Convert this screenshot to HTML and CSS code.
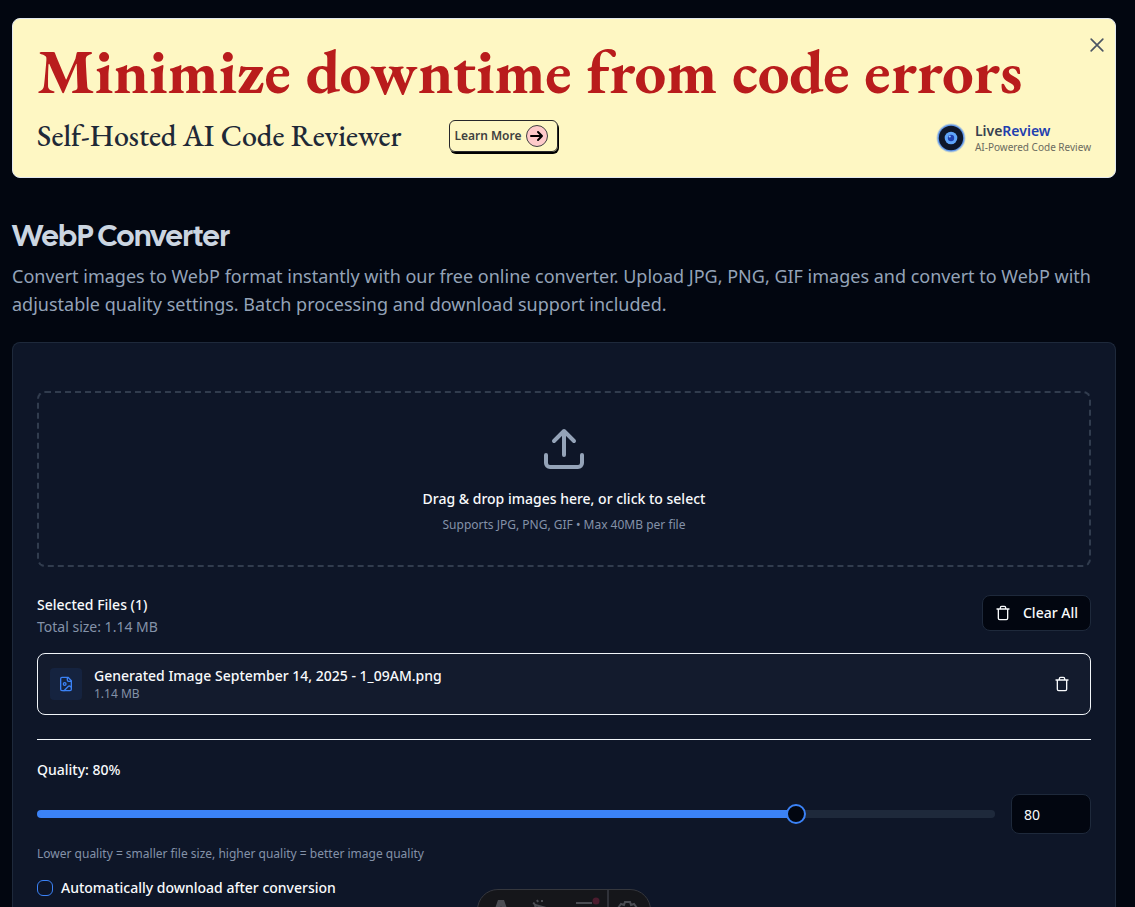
FILE: index.html
```html
<!DOCTYPE html>
<html lang="en">
<head>
<meta charset="utf-8">
<meta name="viewport" content="width=device-width, initial-scale=1">
<title>WebP Converter</title>
<link rel="stylesheet" href="styles.css">
</head>
<body>
<main class="page">
  <section class="banner" aria-label="LiveReview">
    <button class="banner-close" type="button" aria-label="Dismiss">
      <svg viewBox="0 0 24 24" width="20" height="20" class="icon icon-thin"><path d="M5 5l14 14M19 5L5 19"/></svg>
    </button>
    <p class="banner-title">Minimize downtime from code errors</p>
    <div class="banner-row">
      <p class="banner-sub">Self-Hosted AI Code Reviewer</p>
      <a class="learn" href="#learn">Learn More
        <span class="learn-dot"><svg viewBox="0 0 16 16" width="16" height="16" class="icon learn-arrow"><path d="M2 8h11M9 4l4 4-4 4"/></svg></span>
      </a>
      <div class="brand">
        <svg class="brand-logo" viewBox="0 0 32 32" width="32" height="32" aria-hidden="true">
          <circle cx="16" cy="16" r="14.5" fill="#3b82f6" opacity=".3"/>
          <circle cx="16" cy="16" r="13.5" fill="#3b82f6" opacity=".7"/>
          <circle cx="16" cy="16" r="12.2" fill="#0f172a"/>
          <circle cx="16" cy="16" r="6.3" fill="#60a5fa"/>
          <circle cx="16" cy="16" r="3.2" fill="#1e40af"/>
          <circle cx="14.7" cy="14.5" r="1.1" fill="#93c5fd"/>
        </svg>
        <div>
          <p class="brand-name">Live<span>Review</span></p>
          <p class="brand-tag">AI-Powered Code Review</p>
        </div>
      </div>
    </div>
  </section>

  <header class="intro">
    <h1>WebP Converter</h1>
    <p>Convert images to WebP format instantly with our free online converter. Upload JPG, PNG, GIF images and convert to WebP with adjustable quality settings. Batch processing and download support included.</p>
  </header>

  <section class="card">
    <button class="dropzone" type="button">
      <svg viewBox="0 0 24 24" width="48" height="48" class="icon drop-icon"><path d="M21 15v4a2 2 0 0 1-2 2H5a2 2 0 0 1-2-2v-4M17 8l-5-5-5 5M12 3v12"/></svg>
      <span class="drop-title">Drag &amp; drop images here, or click to select</span>
      <span class="small">Supports JPG, PNG, GIF • Max 40MB per file</span>
    </button>

    <div class="files-head">
      <div>
        <h2>Selected Files (1)</h2>
        <p class="total">Total size: 1.14 MB</p>
      </div>
      <button class="clear" type="button">
        <svg viewBox="0 0 24 24" width="16" height="16" class="icon"><path d="M3 6h18M19 6v14c0 1-1 2-2 2H7c-1 0-2-1-2-2V6M8 6V4c0-1 1-2 2-2h4c1 0 2 1 2 2v2"/></svg>
        Clear All
      </button>
    </div>

    <div class="file">
      <span class="file-icon">
        <svg viewBox="0 0 24 24" width="16" height="16" class="icon"><path d="M15 2H6a2 2 0 0 0-2 2v16a2 2 0 0 0 2 2h12a2 2 0 0 0 2-2V7ZM14 2v4a2 2 0 0 0 2 2h4"/><circle cx="10" cy="12" r="2"/><path d="m20 17-1.3-1.3a2.4 2.4 0 0 0-3.4 0L9 22"/></svg>
      </span>
      <div class="file-text">
        <p class="file-name">Generated Image September 14, 2025 - 1_09AM.png</p>
        <p class="small">1.14 MB</p>
      </div>
      <button class="remove" type="button" aria-label="Remove file">
        <svg viewBox="0 0 24 24" width="16" height="16" class="icon"><path d="M3 6h18M19 6v14c0 1-1 2-2 2H7c-1 0-2-1-2-2V6M8 6V4c0-1 1-2 2-2h4c1 0 2 1 2 2v2"/></svg>
      </button>
    </div>

    <div class="settings">
      <label class="quality-label" for="quality">Quality: 80%</label>
      <div class="quality-row">
        <input class="slider" id="quality" type="range" min="1" max="100" value="80">
        <input class="number" type="text" inputmode="numeric" value="80" aria-label="Quality value">
      </div>
      <p class="small">Lower quality = smaller file size, higher quality = better image quality</p>
      <div class="auto">
        <input class="check" id="auto" type="checkbox">
        <label for="auto">Automatically download after conversion</label>
      </div>
    </div>
  </section>
</main>

<div class="toolbar" aria-hidden="true">
  <svg viewBox="0 0 172 40" width="172" height="40">
    <path d="M20 10h6l7 20c-3-1.500-6-2-10-2s-7 .5-10 2ZM23 16l-3 9h6Z" fill="#4b4d53" fill-rule="evenodd"/>
    <g fill="none" stroke="#4b4d53" stroke-width="2">
      <path d="M60 28l-3-13 15 4-6 3 4 5M59 10l1 2M64 10v2M55 13l2 1"/>
      <path d="M98 13h16M98 20h16M98 27h10"/>
      <path d="M147 12h5l1 3 3-1 3 4-2 3 2 3-3 4-3-1-1 3h-5l-1-3-3 1-3-4 2-3-2-3 3-4 3 1Z"/>
      <circle cx="149.500" cy="21" r="3"/>
    </g>
    <path d="M130 0v40" stroke="#303239" stroke-width="2"/>
    <circle cx="118" cy="11" r="3.500" fill="#4b1c2e"/>
  </svg>
</div>
</body>
</html>
```

FILE: styles.css
```css
* {
  box-sizing: border-box;
}

body {
  margin: 0;
  background: #020610;
  color: #f8fafc;
  font-family: "Noto Sans", sans-serif;
  font-size: 14px;
  line-height: 20px;
}

h1, h2, p {
  margin: 0;
}

button, input {
  font: inherit;
  color: inherit;
}

.page {
  display: flex;
  flex-direction: column;
  min-height: 100vh;
  padding: 18px 19px 0 12px;
}

.icon {
  display: block;
  flex: none;
  fill: none;
  stroke: currentColor;
  stroke-width: 2;
  stroke-linecap: round;
  stroke-linejoin: round;
}

.icon-thin {
  stroke-width: 2;
}

.small {
  color: #8492a8;
  font-size: 12px;
  line-height: 16px;
}

/* Banner */
.banner {
  position: relative;
  padding: 20px 24px 17px;
  border: 1px solid #e2e8f0;
  border-radius: 8px;
  background: #fef7c3;
}

.banner-close {
  position: absolute;
  top: 16px;
  right: 8px;
  padding: 0;
  border: 0;
  background: none;
  color: #4b5563;
}

.banner-title {
  color: #b91c1c;
  font-family: "EB Garamond", "Liberation Serif", serif;
  font-size: 63px;
  font-weight: 700;
  line-height: 64px;
}

.banner-row {
  display: flex;
  align-items: center;
  min-height: 48px;
  margin-top: 9px;
}

.banner-sub {
  color: #1f2937;
  font-family: "EB Garamond", "Liberation Serif", serif;
  font-size: 30px;
  font-weight: 500;
  line-height: 36px;
}

.learn {
  display: flex;
  align-items: center;
  gap: 4px;
  height: 32px;
  margin-left: 48px;
  padding: 0 9px 0 4px;
  border: 1px solid #27272a;
  border-radius: 6px;
  box-shadow: 1px 2px 0 #000;
  color: #404040;
  font-size: 12px;
  font-weight: 600;
  text-decoration: none;
}

.learn-dot {
  display: grid;
  place-items: center;
  width: 22px;
  height: 22px;
  border: 1px solid #404040;
  border-radius: 50%;
  background: #fecaca;
  color: #000;
}

.brand {
  display: flex;
  align-items: center;
  gap: 8px;
  margin-top: 4px;
  margin-left: auto;
}

.brand-name {
  color: #374151;
  font-weight: 600;
  line-height: 18px;
}

.brand-name span {
  color: #1e40af;
}

.brand-tag {
  color: #6b6b5f;
  font-size: 10px;
  line-height: 14px;
}

/* Intro */
.intro {
  margin: 40px 0 24px;
}

.intro h1 {
  margin-bottom: 8px;
  color: #cbd5e1;
  font-family: "Cal Sans", "CalSans", Lato, sans-serif;
  font-size: 30px;
  font-weight: 600;
  line-height: 36px;
}

.intro p {
  color: #94a3b8;
  font-size: 18px;
  line-height: 28px;
}

/* Converter card */
.card {
  flex: 1;
  padding: 48px 24px 9px;
  border: 1px solid #1e293b;
  border-bottom: 0;
  border-radius: 8px 8px 0 0;
  background: #0e1628;
}

.dropzone {
  display: flex;
  flex-direction: column;
  align-items: center;
  width: 100%;
  padding: 32px;
  border: 2px dashed #313c4e;
  border-radius: 8px;
  background: none;
}

.drop-icon {
  color: #94a3b8;
}

.drop-title {
  margin: 16px 0 8px;
  font-weight: 500;
}

.files-head {
  display: flex;
  align-items: center;
  justify-content: space-between;
  margin: 24px 0 16px;
  padding-bottom: 2px;
}

.files-head h2 {
  font-size: 14px;
  font-weight: 500;
  line-height: 28px;
}

.total {
  color: #8492a8;
  line-height: 16px;
}

.clear {
  display: flex;
  align-items: center;
  gap: 12px;
  height: 36px;
  padding: 0 12px;
  border: 1px solid #1e293b;
  border-radius: 8px;
  background: #020610;
  font-weight: 500;
}

.file {
  display: flex;
  align-items: center;
  gap: 12px;
  padding: 12px;
  border: 1px solid #f1f5f9;
  border-radius: 8px;
  background: #131b2d;
}

.file-icon {
  display: grid;
  place-items: center;
  width: 32px;
  height: 32px;
  border-radius: 4px;
  background: #15233f;
  color: #3b82f6;
}

.file-text {
  flex: 1;
}

.file-name {
  font-weight: 500;
}

.remove {
  display: grid;
  place-items: center;
  width: 32px;
  height: 32px;
  padding: 0;
  border: 0;
  background: none;
}

/* Settings */
.settings {
  margin-top: 24px;
  padding-top: 20px;
  border-top: 1px solid #f1f5f9;
}

.quality-label {
  display: block;
  font-weight: 500;
}

.quality-row {
  display: flex;
  align-items: center;
  gap: 16px;
  margin: 14px 0 12px;
}

.slider {
  appearance: none;
  flex: 1;
  min-width: 0;
  height: 8px;
  margin: 0;
  border-radius: 4px;
  background: linear-gradient(to right, #3b82f6 79%, #1e293b 79%);
}

.slider::-webkit-slider-thumb {
  appearance: none;
  width: 20px;
  height: 20px;
  border: 2px solid #3b82f6;
  border-radius: 50%;
  background: #020610;
}

.number {
  width: 80px;
  height: 40px;
  padding: 0 12px;
  border: 1px solid #1e293b;
  border-radius: 8px;
  background: #020610;
}

.auto {
  display: flex;
  align-items: center;
  gap: 8px;
  margin-top: 16px;
  font-weight: 500;
}

.check {
  appearance: none;
  width: 16px;
  height: 16px;
  margin: 0;
  border: 1px solid #3b82f6;
  border-radius: 6px;
}

/* Floating toolbar, partly below the window edge */
.toolbar {
  position: fixed;
  bottom: -24px;
  left: calc(50% - 91px);
  overflow: hidden;
  border: 1px solid #35373d;
  border-radius: 21px;
  background: #15161a;
}

.toolbar svg {
  display: block;
}
```
